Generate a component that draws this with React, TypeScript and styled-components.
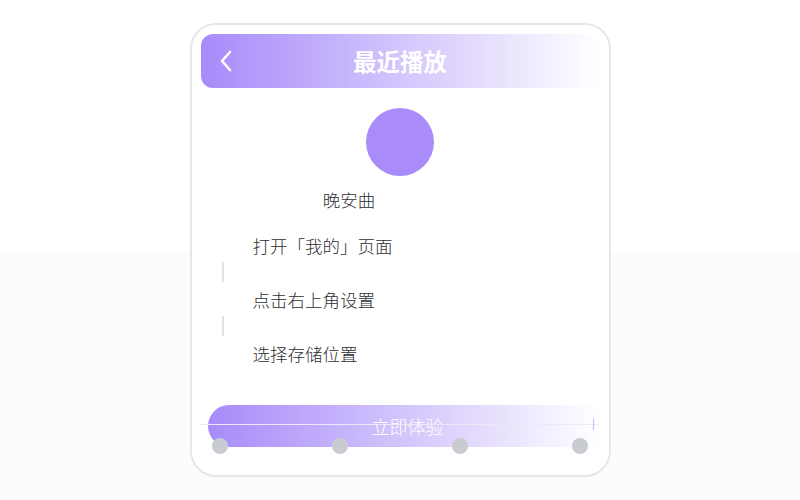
import styled, { createGlobalStyle } from 'styled-components';

const GlobalStyle = createGlobalStyle`
  html, body {
    margin: 0;
    padding: 0;
  }
  body {
    background: linear-gradient(180deg, #ffffff 0, #ffffff 252px, #fcfcfd 252px);
    min-height: 500px;
    font-family: "Noto Sans CJK SC", "Noto Sans", sans-serif;
  }
`;

const Page = styled.main`
  display: flex;
  justify-content: center;
  padding-top: 23px;
`;

const Card = styled.section`
  box-sizing: border-box;
  width: 421px;
  height: 454px;
  border: 2px solid #e6e6ec;
  border-radius: 26px;
  background: #ffffff;
  padding: 9px 9px 0;
  display: flex;
  flex-direction: column;
`;

const Header = styled.header`
  height: 54px;
  border-radius: 12px;
  background: linear-gradient(90deg, #a78bfa 0%, #d3c5fc 50%, #ffffff 100%);
  display: flex;
  align-items: center;
  position: relative;
  justify-content: center;
`;

const BackButton = styled.button`
  position: absolute;
  left: 15px;
  top: 16px;
  width: 20px;
  height: 22px;
  padding: 0;
  border: none;
  background: none;
  display: flex;
  align-items: center;
  justify-content: center;
`;

const Title = styled.h1`
  margin: 0;
  font-size: 23.5px;
  font-weight: 700;
  color: #ffffff;
`;

const Profile = styled.div`
  display: flex;
  flex-direction: column;
  align-items: center;
  padding-top: 20px;
`;

const Avatar = styled.div`
  width: 68px;
  height: 68px;
  border-radius: 50%;
  background: #a98cfa;
`;

const Name = styled.div`
  margin-top: 11px;
  margin-right: 102px;
  font-size: 17.5px;
  font-weight: 300;
  line-height: 26px;
  color: #2e2e33;
`;

const Steps = styled.ol`
  list-style: none;
  margin: 20px 0 0;
  padding: 0 0 0 52px;
  display: flex;
  flex-direction: column;
`;

const Step = styled.li`
  font-size: 17.5px;
  font-weight: 300;
  line-height: 26px;
  color: #2e2e33;
`;

const Connector = styled.div`
  width: 2px;
  height: 20px;
  margin: 3px 0 5px -31px;
  background: #e3e3e6;
`;

const Footer = styled.div`
  position: relative;
  margin-top: 38px;
  padding-left: 7px;
`;

const CtaButton = styled.button`
  box-sizing: border-box;
  width: 392px;
  height: 42px;
  border: none;
  border-radius: 21px 12px 12px 21px;
  background: linear-gradient(90deg, #a78bfa 0%, #d3c5fc 50%, #ffffff 100%);
  color: #ffffff;
  font-family: "Noto Sans CJK SC", sans-serif;
  font-size: 18px;
  font-weight: 300;
  padding: 0 0 0 8px;
`;

const Slider = styled.div`
  position: absolute;
  left: -1px;
  top: 19px;
  width: 398px;
  height: 30px;
`;

const Track = styled.div`
  position: absolute;
  left: 0;
  right: 0;
  top: 0;
  height: 1px;
  background: #ece8f6;
`;

const Tick = styled.div`
  position: absolute;
  right: 4px;
  top: -6px;
  width: 1px;
  height: 12px;
  background: #c9bbf7;
`;

const Stops = styled.div`
  position: absolute;
  left: 12px;
  right: 10px;
  top: 14px;
  display: flex;
  justify-content: space-between;
`;

const Stop = styled.span`
  width: 16px;
  height: 16px;
  border-radius: 50%;
  background: #c8ccd2;
`;

const steps = ['打开「我的」页面', '点击右上角设置', '选择存储位置'];

const App = () => {
  return (
    <>
      <GlobalStyle />
      <Page>
        <Card>
          <Header>
            <BackButton aria-label="返回">
              <svg width="14" height="22" viewBox="0 0 14 22" fill="none">
                <path d="M11 2 L3 11 L11 20" stroke="#ffffff" strokeWidth="2.6" strokeLinecap="round" strokeLinejoin="round" />
              </svg>
            </BackButton>
            <Title>最近播放</Title>
          </Header>

          <Profile>
            <Avatar />
            <Name>晚安曲</Name>
          </Profile>

          <Steps>
            {steps.map((s, i) => (
              <div key={s}>
                <Step>{s}</Step>
                {i < steps.length - 1 && <Connector />}
              </div>
            ))}
          </Steps>

          <Footer>
            <CtaButton>立即体验</CtaButton>
            <Slider>
              <Track />
              <Tick />
              <Stops>
                {[0, 1, 2, 3].map((i) => (
                  <Stop key={i} />
                ))}
              </Stops>
            </Slider>
          </Footer>
        </Card>
      </Page>
    </>
  );
};

export default App;
